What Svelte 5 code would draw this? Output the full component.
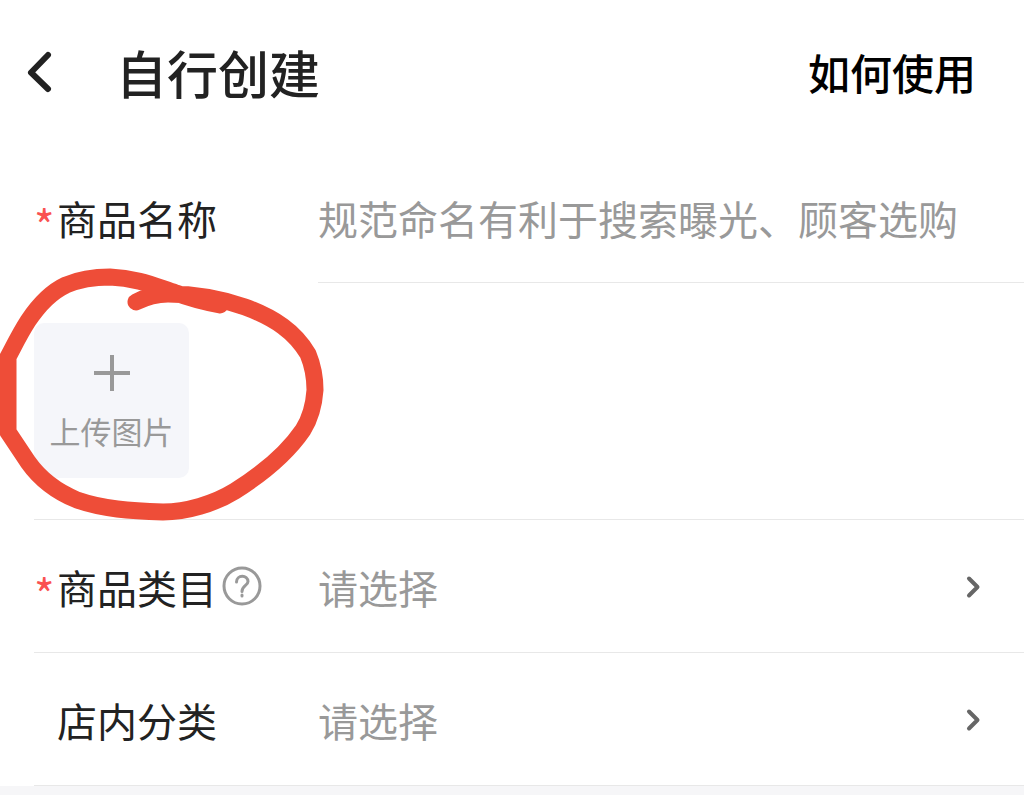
<script lang="ts">
	interface Picker {
		id: string;
		label: string;
		required: boolean;
		help: boolean;
	}

	const pickers: Picker[] = [
		{ id: "category", label: "商品类目", required: true, help: true },
		{ id: "shop-group", label: "店内分类", required: false, help: false },
	];

	let name = $state("");
</script>

<div class="page">
	<header class="top-bar">
		<button class="back" type="button" aria-label="返回">
			<svg width="28" height="44" viewBox="0 0 28 44">
				<path d="M22 5 L5 22.500 L22 39" />
			</svg>
		</button>
		<h1>自行创建</h1>
		<a class="guide" href="#guide">如何使用</a>
	</header>

	<form>
		<div class="row name-row">
			<div class="label-cell">
				<span class="star">*</span>
				<label for="name">商品名称</label>
			</div>
			<div class="field">
				<input
					id="name"
					type="text"
					placeholder="规范命名有利于搜索曝光、顾客选购"
					bind:value={name}
				/>
			</div>
		</div>

		<div class="upload-row">
			<button class="upload" type="button">
				<svg width="36" height="36" viewBox="0 0 36 36">
					<path d="M18 0 V36 M0 18 H36" />
				</svg>
				<span>上传图片</span>
			</button>
			<svg class="marker" width="340" height="262" viewBox="0 263 340 262" aria-hidden="true">
				<path
					d="M136 302 C148 296 156 294 168 294 C196 294 222 299 245 307 C275 318 295 332 308 354
					C313 366 315 378 315 390 C314 404 310 419 303 430 C288 452 262 474 235 491
					C214 504 186 512 163 512 C130 511 103 509 77 500 C55 491 40 479 28 462 L8 432 V357
					C14 346 19 335 28 321 C40 303 51 292 66 285 C80 279 92 277 110 277
					C138 278 157 287 176 293 C192 299 205 302 220 305"
				/>
			</svg>
		</div>

		{#each pickers as picker (picker.id)}
			<div class="row picker-row">
				<div class="label-cell">
					<span class="star">{picker.required ? "*" : ""}</span>
					<label for={picker.id}>{picker.label}</label>
					{#if picker.help}
						<button class="help" type="button" aria-label="说明">
							<svg width="40" height="40" viewBox="0 0 40 40">
								<circle cx="20" cy="20" r="18" />
								<path d="M14.500 16 C14.500 8.500 26 8.500 26 15.500 C26 19.500 20 19.500 20 25.500" />
								<path d="M20 29 V30" />
							</svg>
						</button>
					{/if}
				</div>
				<div class="field">
					<select id={picker.id}>
						<option value="">请选择</option>
					</select>
					<svg class="arrow" width="16" height="24" viewBox="0 0 16 24">
						<path d="M3 3.500 L11.500 12 L3 20.500" />
					</svg>
				</div>
			</div>
		{/each}
	</form>
</div>

<style>
	:global(body) {
		margin: 0;
		background: #f6f6f8;
	}

	.page {
		background: #fff;
		color: #222;
		font-family: "Noto Sans CJK SC", sans-serif;
		font-size: 40px;
		line-height: 60px;
		overflow: hidden;
	}

	button,
	input,
	select {
		margin: 0;
		padding: 0;
		border: 0;
		background: none;
		color: inherit;
		font: inherit;
	}

	svg {
		display: block;
		fill: none;
		stroke-linecap: round;
		stroke-linejoin: round;
	}

	.top-bar {
		display: flex;
		align-items: center;
		height: 151px;
		padding: 0 48px 8px 26px;
		box-sizing: border-box;
	}

	.back {
		margin-right: 62px;
	}

	.back svg {
		stroke: #222;
		stroke-width: 6;
	}

	h1 {
		flex: 1;
		margin: 0;
		font-size: 51px;
		font-weight: 500;
	}

	.guide {
		color: #000;
		font-size: 42px;
		font-weight: 500;
		text-decoration: none;
	}

	.row {
		display: flex;
		margin-left: 34px;
	}

	.label-cell {
		display: flex;
		align-items: center;
		flex: 0 0 284px;
		height: 132px;
		padding-top: 2px;
		box-sizing: border-box;
	}

	.star {
		width: 23px;
		padding-top: 12px;
		color: #fa5151;
		font-size: 44px;
	}

	.help {
		margin: 0 0 2px 5px;
	}

	.help svg {
		stroke: #999;
		stroke-width: 3;
	}

	.field {
		display: flex;
		align-items: center;
		flex: 1;
		min-width: 0;
		padding: 2px 42px 0 0;
		color: #999;
	}

	.name-row .field,
	.upload-row,
	.picker-row {
		border-bottom: 1px solid #e8e8e8;
	}

	input {
		width: 100%;
		outline: none;
		color: #222;
	}

	input::placeholder {
		color: #999;
		opacity: 1;
	}

	select {
		flex: 1;
		appearance: none;
		outline: none;
	}

	.arrow {
		stroke: #666;
		stroke-width: 4;
	}

	.upload-row {
		position: relative;
		margin-left: 34px;
		padding: 40px 0 41px;
	}

	.upload {
		display: flex;
		flex-direction: column;
		align-items: center;
		gap: 18px;
		width: 155px;
		height: 155px;
		padding-top: 32px;
		border-radius: 10px;
		background: #f5f6fa;
		color: #999;
		font-size: 31px;
		line-height: 44px;
	}

	.upload svg {
		stroke: #999;
		stroke-width: 4;
		stroke-linecap: butt;
	}

	/* hand-drawn ring around the upload tile */
	.marker {
		position: absolute;
		top: -20px;
		left: -34px;
		stroke: #ee4d38;
		stroke-width: 17;
		pointer-events: none;
	}
</style>
